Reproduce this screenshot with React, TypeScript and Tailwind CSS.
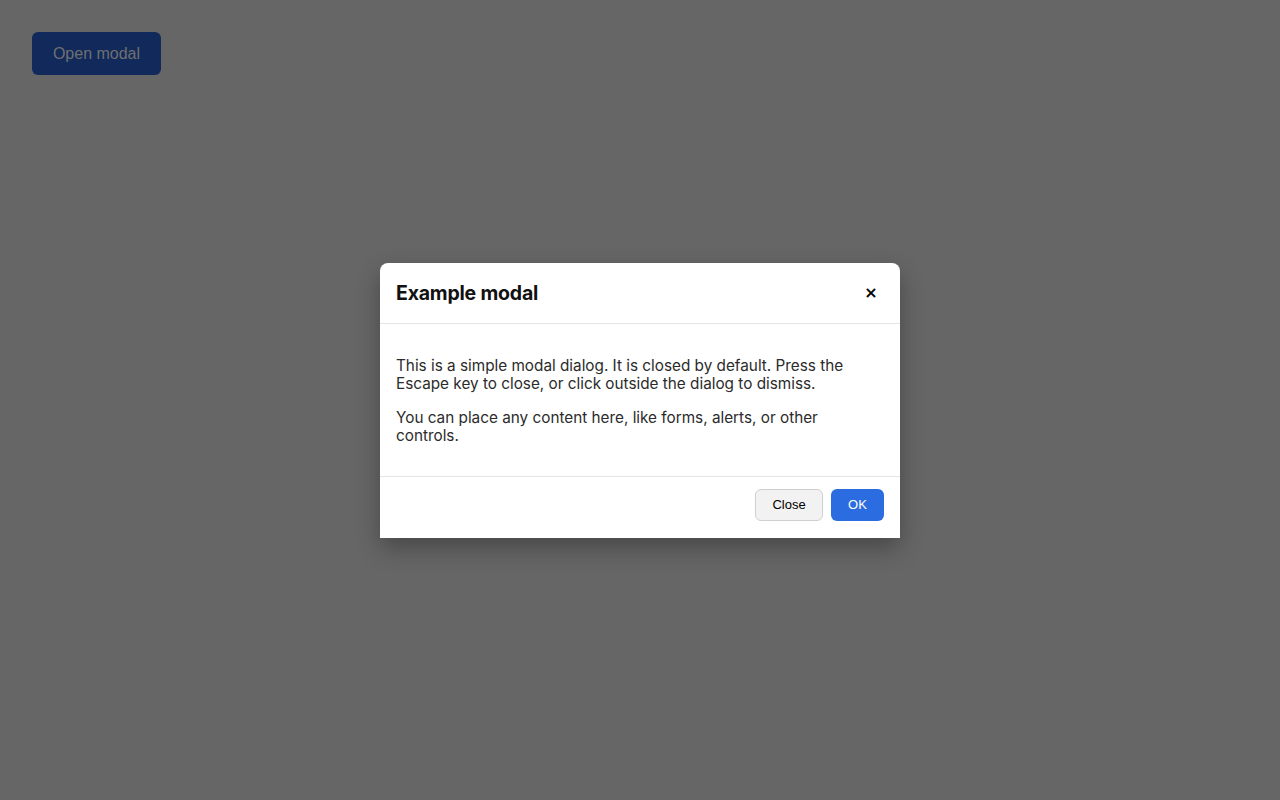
import React from 'react';

export default function App() {
  return (
    <div className="relative min-h-screen w-full bg-[#666666] font-['Liberation_Sans',Arial,sans-serif]">
      <div className="p-8">
        <button className="h-[43px] w-[129px] rounded-md bg-[#112a5b] text-[16px] text-[#6f7071]">
          Open modal
        </button>
      </div>

      {/* Dialog */}
      <div className="absolute left-[380px] top-[263px] w-[520px] overflow-hidden rounded-t-lg bg-white shadow-[0_10px_25px_rgba(0,0,0,0.3)] font-['Inter',sans-serif]">
        <div className="flex h-[61px] items-center justify-between border-b border-[#e5e5e5] px-4">
          <h2 className="mt-[1px] text-[19.5px] font-bold tracking-[-0.2px] text-[#111111]">Example modal</h2>
          <button className="mr-[1px] flex h-6 w-6 items-center justify-center text-[16px] font-bold leading-none text-black font-['DejaVu_Sans',sans-serif]">
            ×
          </button>
        </div>
        <div className="flex flex-col gap-4 px-4 pb-[31px] pt-[33px] text-[15.3px] leading-[18px] text-[#2b2b2b]">
          <p>This is a simple modal dialog. It is closed by default. Press the Escape key to close, or click outside the dialog to dismiss.</p>
          <p>You can place any content here, like forms, alerts, or other controls.</p>
        </div>
        <div className="flex h-[62px] items-start justify-end gap-2 border-t border-[#e5e5e5] px-4 pt-3 font-['Liberation_Sans',Arial,sans-serif]">
          <button className="h-8 w-[68px] rounded-md border border-[#cfcfcf] bg-[#f2f2f2] text-[13px] text-black">
            Close
          </button>
          <button className="h-8 w-[53px] rounded-md bg-[#2b6de0] text-[13px] text-white">
            OK
          </button>
        </div>
      </div>
    </div>
  );
}
